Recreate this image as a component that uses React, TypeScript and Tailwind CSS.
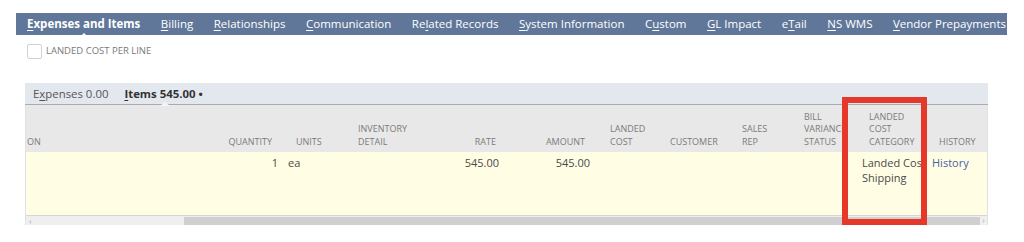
import React from "react";

type Col = {
  head: string[];
  w: string;
  hc: string;
  data?: string[];
  dc?: string;
};

const navTabs: { pre: string; key: string; post: string; active?: boolean }[] = [
  { pre: "", key: "E", post: "xpenses and Items", active: true },
  { pre: "", key: "B", post: "illing" },
  { pre: "", key: "R", post: "elationships" },
  { pre: "", key: "C", post: "ommunication" },
  { pre: "Re", key: "l", post: "ated Records" },
  { pre: "", key: "S", post: "ystem Information" },
  { pre: "C", key: "u", post: "stom" },
  { pre: "", key: "G", post: "L Impact" },
  { pre: "e", key: "T", post: "ail" },
  { pre: "", key: "N", post: "S WMS" },
  { pre: "", key: "V", post: "endor Prepayments" },
];

const cols: Col[] = [
  { head: ["ON"], w: "w-[195px]", hc: "pl-[1px]" },
  { head: ["QUANTITY"], w: "w-[62px]", hc: "text-right pr-[11px]", data: ["1"], dc: "text-right pr-[5px]" },
  { head: ["UNITS"], w: "w-[68px]", hc: "pl-[13px]", data: ["ea"], dc: "pl-[5px]" },
  { head: ["INVENTORY", "DETAIL"], w: "w-[70px]", hc: "pl-[7px]" },
  { head: ["RATE"], w: "w-[80px]", hc: "text-right pr-[5px]", data: ["545.00"], dc: "text-right pr-[2px]" },
  { head: ["AMOUNT"], w: "w-[95px]", hc: "text-right pr-[11px]", data: ["545.00"], dc: "text-right pr-[6px]" },
  { head: ["LANDED", "COST"], w: "w-[65px]", hc: "pl-[14px]" },
  { head: ["CUSTOMER"], w: "w-[72px]", hc: "pl-[9px]" },
  { head: ["SALES", "REP"], w: "w-[63px]", hc: "pl-[9px]" },
  { head: ["BILL", "VARIANCE", "STATUS"], w: "w-[60px]", hc: "pl-[8px]" },
  { head: ["LANDED", "COST", "CATEGORY"], w: "w-[70px]", hc: "pl-[13px]", data: ["Landed Cost", "Shipping"], dc: "pl-[6px]" },
  { head: ["HISTORY"], w: "w-[63px]", hc: "pl-[13px]", data: ["History"], dc: "pl-[6px] text-[#4b62a6]" },
];

export default function App() {
  return (
    <div className="relative w-[1024px] h-[242px] overflow-hidden bg-white font-['Open_Sans',sans-serif]">
      {/* main tab strip */}
      <div className="pt-[13px] pl-[16px]">
        <div className="flex h-[22px] w-[991px] items-center gap-[20.5px] overflow-hidden whitespace-nowrap bg-[#607799] pl-[11px] text-[11.5px] text-white">
          {navTabs.map((t, i) => (
            <span key={i} className={`relative ${t.active ? "font-bold" : ""}`}>
              {t.pre}
              <span className="underline underline-offset-2">{t.key}</span>
              {t.post}
              {t.active && (
                <span className="absolute left-1/2 top-[18px] -ml-[5px] h-0 w-0 border-x-[5px] border-b-[5px] border-x-transparent border-b-white" />
              )}
            </span>
          ))}
        </div>
      </div>

      {/* landed cost per line */}
      <div className="mt-[9px] flex items-center gap-[4px] pl-[27px]">
        <span className="h-[15px] w-[15px] rounded-[2px] border border-[#d2d2d2] bg-white" />
        <span className="text-[9.5px] text-[#7a7a7a]">LANDED COST PER LINE</span>
      </div>

      {/* sublist */}
      <div className="ml-[25px] mt-[24px] w-[963px]">
        <div className="flex h-[22px] items-center gap-[16px] border-b border-[#ababab] bg-[#e3e8ef] pl-[8px] text-[11.4px] whitespace-nowrap">
          <span className="text-[#555]">
            E<span className="underline underline-offset-2">x</span>penses 0.00
          </span>
          <span className="relative font-bold text-[#333]">
            <span className="underline underline-offset-2">I</span>tems 545.00 •
            <span className="absolute left-[36px] top-[17px] h-0 w-0 border-x-[5px] border-b-[4px] border-x-transparent border-b-[#f6f6f6]" />
          </span>
        </div>

        <div className="border-x border-[#e2e2e2]">
          <div className="flex h-[47px] bg-[#e8e8e8]">
            {cols.map((c, i) => (
              <div
                key={i}
                className={`${c.w} ${c.hc} flex shrink-0 flex-col justify-end overflow-hidden whitespace-nowrap pb-[4px] text-[9px] leading-[12.5px] text-[#7b7b7b]`}
              >
                {c.head.map((h) => (
                  <span key={h}>{h}</span>
                ))}
              </div>
            ))}
          </div>

          <div className="flex h-[63px] bg-[#fffee5]">
            {cols.map((c, i) => (
              <div
                key={i}
                className={`${c.w} ${c.dc ?? ""} flex shrink-0 flex-col overflow-hidden whitespace-nowrap pt-[3px] text-[11px] leading-[15px] text-[#4a4a4a]`}
              >
                {c.data?.map((d) => (
                  <span key={d}>{d}</span>
                ))}
              </div>
            ))}
          </div>

          <div className="flex h-[10px] items-center border-t border-[#d6d6d6] bg-[#efefef] text-[#9a9a9a]">
            <span className="w-[158px] pl-[3px] text-[8px] leading-none">‹</span>
            <span className="h-[8px] flex-1 bg-[#cfcfcf]" />
            <span className="w-[7px] text-center text-[7px] leading-none">›</span>
          </div>
        </div>
      </div>

      {/* highlight */}
      <div className="absolute left-[842px] top-[97px] h-[128px] w-[85px] border-[6px] border-[#e5372a]" />
    </div>
  );
}
